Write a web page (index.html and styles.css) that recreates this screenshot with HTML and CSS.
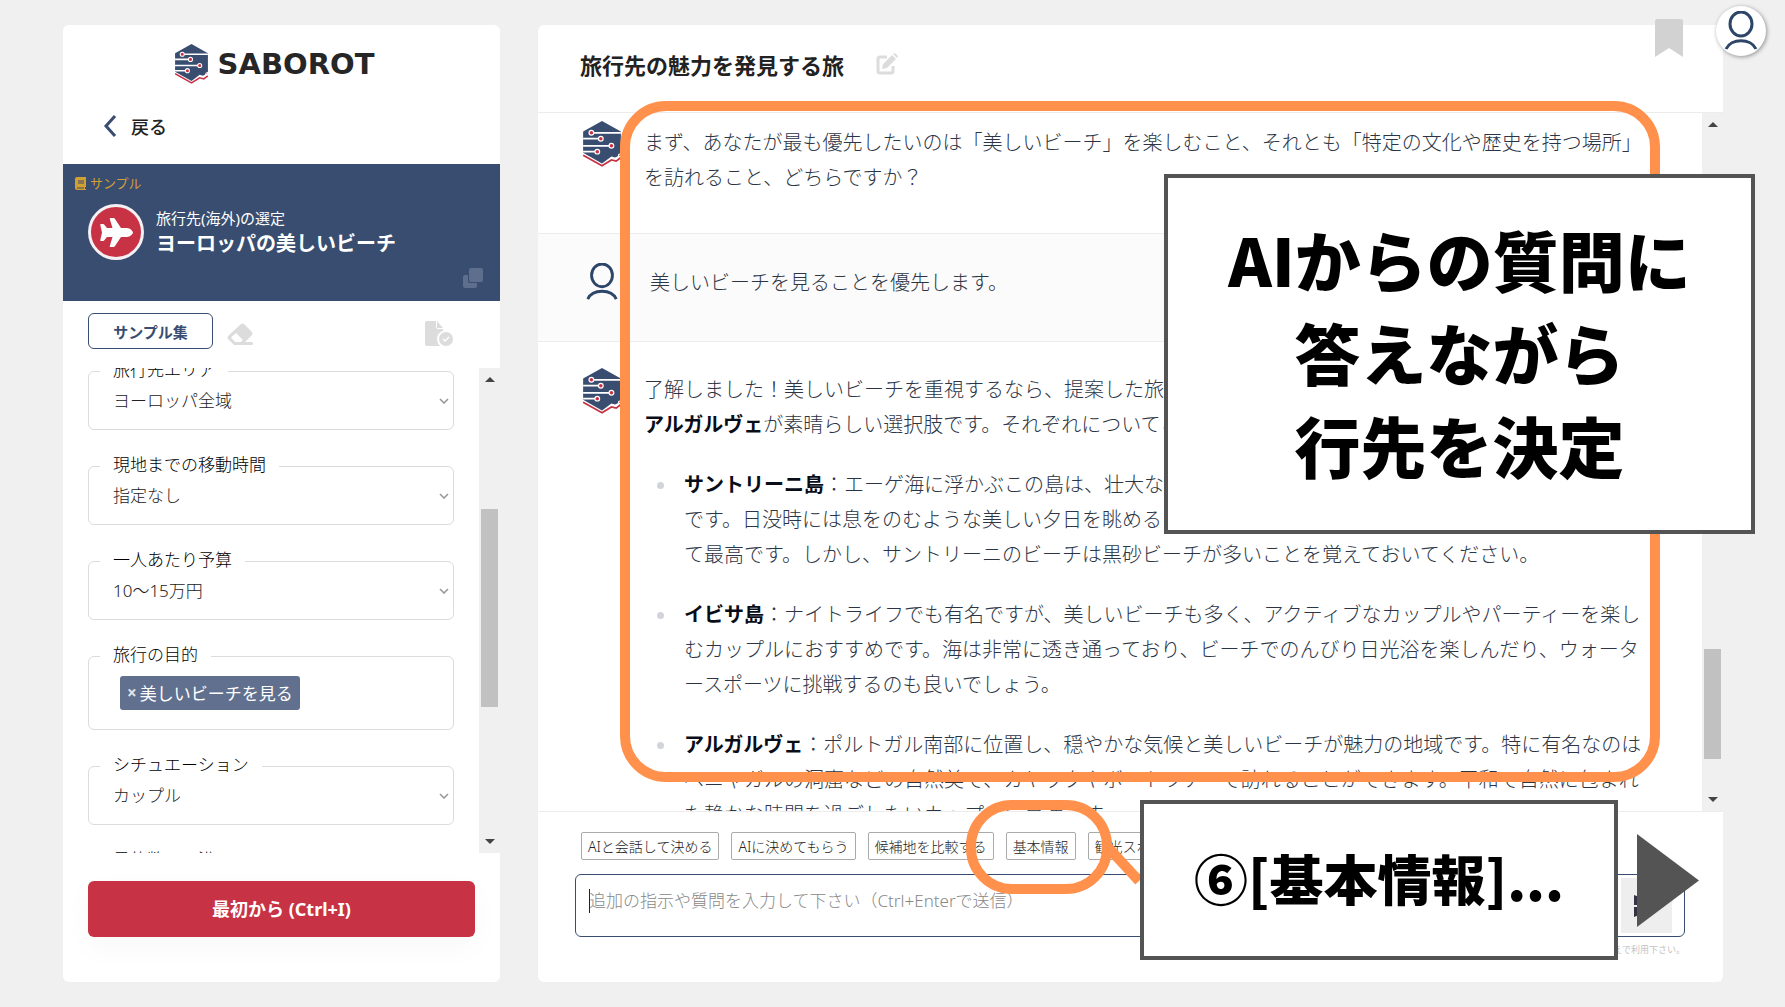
FILE: index.html
```html
<!DOCTYPE html>
<html lang="ja">
<head>
    <meta charset="UTF-8">
    <meta name="viewport" content="width=device-width, initial-scale=1.0">
    <title>SABOROT</title>
    <link rel="stylesheet" href="styles.css">
</head>
<body>
    <!-- shared icons -->
    <svg class="sprite" aria-hidden="true">
        <symbol id="icon-robot" viewBox="0 0 32 39">
            <path d="M0 29 L16 38 L24 33 L28 34 L32 31" fill="none" stroke="#c73345" stroke-width="1.500"></path>
            <path d="M16 0 L32 9 V27 L29 30 L27 31 L24 30 L16 36 L0 27 V9 Z" fill="#384d70"></path>
            <path d="M7 10 H32 M0 15 H15 M0 21 H24 M0 26 H12" stroke="#fff" stroke-width="1.500"></path>
            <g fill="#c73345" stroke="#fff" stroke-width="1">
                <circle cx="7" cy="10" r="2"></circle>
                <circle cx="15" cy="15" r="2"></circle>
                <circle cx="24" cy="21" r="2"></circle>
                <circle cx="12" cy="26" r="2"></circle>
                <circle cx="31" cy="29" r="1"></circle>
            </g>
        </symbol>
        <symbol id="icon-user" viewBox="0 0 36 40">
            <ellipse cx="18" cy="13" rx="11" ry="12" fill="none" stroke="#2c4568" stroke-width="3"></ellipse>
            <path d="M3 38 C8 27 28 27 33 38" fill="none" stroke="#2c4568" stroke-width="3"></path>
        </symbol>
        <symbol id="icon-down" viewBox="0 0 10 6">
            <path d="M1 1 L5 5 L9 1" fill="none" stroke="#999" stroke-width="1.6"></path>
        </symbol>
    </svg>

    <div class="app">
        <aside class="sidebar">
            <div class="logo">
                <svg width="33" height="40"><use href="#icon-robot"></use></svg>
                <span>SABOROT</span>
            </div>

            <a href="#" class="back">
                <svg width="14" height="22" viewBox="0 0 14 22" fill="none" stroke="#384d70" stroke-width="3">
                    <path d="M12 1 L3 11 L12 21"></path>
                </svg>
                戻る
            </a>

            <div class="agent">
                <div class="agent-tag">
                    <svg width="11" height="13" viewBox="0 0 11 13">
                        <path d="M2 0 H11 V10 H10 V12 H11 V13 H2 Q0 13 0 11 V2 Q0 0 2 0 Z" fill="#d2a032"></path>
                        <path d="M3 4 H9 M3 6 H9 M2 11 H9" stroke="#384d70"></path>
                    </svg>
                    サンプル
                </div>
                <div class="agent-info">
                    <div class="agent-icon">
                        <svg width="33" height="29" viewBox="0 0 33 29">
                            <path d="M27 10 C30 10 33 13 33 14.500 C33 16 30 19 27 19 H21 L15 28 Q14.500 29 13.500 29 H10.500 Q9.500 29 9.800 28 L12.500 19 H7 L4.500 22 Q4 23 3 23 H1 Q0 23 .3 22 L2 14.500 L.3 7 Q0 6 1 6 H3 Q4 6 4.500 7 L7 10 H12.500 L9.800 1 Q9.500 0 10.500 0 H13.500 Q14.500 0 15 1 L21 10 Z" fill="#fff"></path>
                        </svg>
                    </div>
                    <div>
                        <p class="agent-type">旅行先(海外)の選定</p>
                        <h2>ヨーロッパの美しいビーチ</h2>
                    </div>
                </div>
                <button type="button" class="icon-button copy" aria-label="コピー">
                    <svg width="20" height="20" viewBox="0 0 20 20" fill="#5d6f8c">
                        <path d="M2 7 H5 V13 Q5 15 7 15 H14 V18 Q14 20 12 20 H2 Q0 20 0 18 V9 Q0 7 2 7 Z"></path>
                        <rect x="6" y="0" width="14" height="14" rx="2"></rect>
                    </svg>
                </button>
            </div>

            <div class="tools">
                <button type="button" class="sample-button">サンプル集</button>
                <button type="button" class="icon-button" aria-label="クリア">
                    <svg width="26" height="22" viewBox="0 0 26 22">
                        <path d="M14 1 Q15.500 0 17 1 L25 9 Q26 10.500 25 12 L18 19 H25 Q26 19 26 20.500 Q26 22 25 22 H7 L1 16 Q0 14.500 1 13 Z M9 10 L4 14.500 L8 19 H14 L16 17 Z" fill="#dcdcdc" fill-rule="evenodd"></path>
                    </svg>
                </button>
                <button type="button" class="icon-button tools-end" aria-label="適用">
                    <svg width="28" height="25" viewBox="0 0 28 25">
                        <path d="M2 0 H11 V6 Q11 8 13 8 H18 V10 Q12 12 12 18 Q12 22 15 25 H2 Q0 25 0 23 V2 Q0 0 2 0 Z M12 0 L18 7 H12 Z" fill="#dcdcdc"></path>
                        <circle cx="21" cy="18" r="7" fill="#dcdcdc"></circle>
                        <path d="M18 18 L20 20 L24 16" fill="none" stroke="#fff" stroke-width="1.500"></path>
                    </svg>
                </button>
            </div>

            <div class="form-scroll">
                <form class="fields">
                    <div class="field">
                        <label for="area">旅行先エリア</label>
                        <select id="area"><option>ヨーロッパ全域</option></select>
                        <svg class="field-arrow"><use href="#icon-down"></use></svg>
                    </div>
                    <div class="field">
                        <label for="time">現地までの移動時間</label>
                        <select id="time"><option>指定なし</option></select>
                        <svg class="field-arrow"><use href="#icon-down"></use></svg>
                    </div>
                    <div class="field">
                        <label for="budget">一人あたり予算</label>
                        <select id="budget"><option>10～15万円</option></select>
                        <svg class="field-arrow"><use href="#icon-down"></use></svg>
                    </div>
                    <div class="field field-tags" role="group" aria-labelledby="purpose">
                        <span class="field-label" id="purpose">旅行の目的</span>
                        <button type="button" class="tag"><b>×</b>美しいビーチを見る</button>
                    </div>
                    <div class="field">
                        <label for="situation">シチュエーション</label>
                        <select id="situation"><option>カップル</option></select>
                        <svg class="field-arrow"><use href="#icon-down"></use></svg>
                    </div>
                    <div class="field">
                        <label for="days">目的数の川沿</label>
                        <select id="days"><option>指定なし</option></select>
                    </div>
                </form>
                <div class="scrollbar">
                    <i class="arrow-up"></i>
                    <i class="thumb form-thumb"></i>
                    <i class="arrow-down"></i>
                </div>
            </div>

            <button type="button" class="restart">最初から (Ctrl+I)</button>
        </aside>

        <main class="chat">
            <header class="chat-header">
                <h1>旅行先の魅力を発見する旅</h1>
                <button type="button" class="icon-button" aria-label="編集">
                    <svg width="22" height="22" viewBox="0 0 22 22">
                        <path d="M11 4 H4 Q2 4 2 6 V18 Q2 20 4 20 H15 Q17 20 17 18 V13" fill="none" stroke="#dcdcdc" stroke-width="3"></path>
                        <path d="M16 2 L20 6 L11 15 L6 16 L7 11 Z M17 1 Q18.500 -.5 20 1 L21 2 Q22.500 3.500 21 5 Z" fill="#dcdcdc"></path>
                    </svg>
                </button>
            </header>

            <div class="chat-scroll">
                <div class="messages">
                    <article class="message message-first">
                        <svg class="avatar"><use href="#icon-robot"></use></svg>
                        <div class="message-text">
                            <p>まず、あなたが最も優先したいのは「美しいビーチ」を楽しむこと、それとも「特定の文化や歴史を持つ場所」を訪れること、どちらですか？</p>
                        </div>
                    </article>
                    <article class="message message-user">
                        <svg class="avatar"><use href="#icon-user"></use></svg>
                        <div class="message-text">
                            <p>美しいビーチを見ることを優先します。</p>
                        </div>
                    </article>
                    <article class="message">
                        <svg class="avatar"><use href="#icon-robot"></use></svg>
                        <div class="message-text">
                            <p>了解しました！美しいビーチを重視するなら、提案した旅行先の中でも、サントリーニ島、イビサ島、そして、<strong>アルガルヴェ</strong>が素晴らしい選択肢です。それぞれについてご紹介します。</p>
                            <ul>
                                <li><strong>サントリーニ島</strong>：エーゲ海に浮かぶこの島は、壮大な景色と白い建物、そして青い屋根で知られる人気の地です。日没時には息をのむような美しい夕日を眺めることができ、ロマンチックなカップルでの旅行先として最高です。しかし、サントリーニのビーチは黒砂ビーチが多いことを覚えておいてください。</li>
                                <li><strong>イビサ島</strong>：ナイトライフでも有名ですが、美しいビーチも多く、アクティブなカップルやパーティーを楽しむカップルにおすすめです。海は非常に透き通っており、ビーチでのんびり日光浴を楽しんだり、ウォータースポーツに挑戦するのも良いでしょう。</li>
                                <li><strong>アルガルヴェ</strong>：ポルトガル南部に位置し、穏やかな気候と美しいビーチが魅力の地域です。特に有名なのはベニャガルの洞窟などの自然美で、カヤックやボートツアーで訪れることができます。平和で自然に包まれた静かな時間を過ごしたいカップルに最適です。</li>
                            </ul>
                        </div>
                    </article>
                </div>
                <div class="scrollbar">
                    <i class="arrow-up"></i>
                    <i class="thumb chat-thumb"></i>
                    <i class="arrow-down"></i>
                </div>
            </div>

            <footer class="composer">
                <div class="chips">
                    <button type="button">AIと会話して決める</button>
                    <button type="button">AIに決めてもらう</button>
                    <button type="button">候補地を比較する</button>
                    <button type="button">基本情報</button>
                    <button type="button">観光スポット</button>
                </div>
                <div class="input-box">
                    <textarea rows="1" aria-label="メッセージ" placeholder="追加の指示や質問を入力して下さい（Ctrl+Enterで送信）"></textarea>
                    <span class="caret"></span>
                    <button type="button" class="send" aria-label="送信">
                        <svg width="26" height="24" viewBox="0 0 26 24" fill="#334">
                            <path d="M0 1 L26 11 H0 Z M0 23 L26 13 H0 Z"></path>
                        </svg>
                    </button>
                </div>
                <p class="notice">回答の正確性は保証されません。ご確認のうえで利用下さい。</p>
            </footer>

            <!-- tutorial overlay -->
            <div class="mark mark-messages"></div>
            <div class="mark mark-chip"></div>
            <svg class="mark-tail" viewBox="0 0 40 44"><path d="M3 3 L36 39" stroke="#ff914d" stroke-width="10"></path></svg>
            <div class="callout callout-main">AIからの質問に<br>答えながら<br>行先を決定</div>
            <div class="callout callout-step">⑥[基本情報]...</div>
            <button type="button" class="next" aria-label="次へ"></button>
            <svg class="bookmark" viewBox="0 0 28 38"><path d="M2 0 H26 Q28 0 28 2 V38 L14 29 L0 38 V2 Q0 0 2 0 Z" fill="#d2d2d2"></path></svg>
            <button type="button" class="account" aria-label="アカウント">
                <svg width="36" height="40"><use href="#icon-user"></use></svg>
            </button>
        </main>
    </div>
</body>
</html>
```

FILE: styles.css
```css
* {
    margin: 0;
    padding: 0;
    box-sizing: border-box;
}

body {
    background-color: #f0f0f0;
    color: #222;
    font-family: "Noto Sans", "Noto Sans CJK JP", sans-serif;
}

button,
select,
textarea {
    font-family: inherit;
    border: none;
    background: none;
}

button {
    cursor: pointer;
}

svg {
    display: block;
    flex-shrink: 0;
}

.sprite {
    position: absolute;
    width: 0;
    height: 0;
}

.app {
    display: flex;
    gap: 38px;
    height: 100vh;
    padding: 25px 62px 25px 63px;
    overflow: hidden;
}

/* sidebar */
.sidebar {
    display: flex;
    flex-direction: column;
    flex: 0 0 437px;
    background-color: #fff;
    border-radius: 6px;
}

.logo {
    display: flex;
    align-items: center;
    justify-content: center;
    gap: 10px;
    height: 78px;
    padding-right: 14px;
    font: bold 29px "DejaVu Sans", sans-serif;
    color: #262626;
}

.back {
    display: flex;
    align-items: center;
    gap: 14px;
    height: 61px;
    padding: 0 40px 16px;
    font-size: 18px;
    font-weight: 500;
    color: #222;
    text-decoration: none;
}

.agent {
    position: relative;
    height: 137px;
    padding: 10px 12px;
    background-color: #384d70;
    color: #fff;
}

.agent-tag {
    display: flex;
    align-items: center;
    gap: 4px;
    font-size: 13px;
    line-height: 18px;
    color: #d2a032;
}

.agent-info {
    display: flex;
    align-items: center;
    gap: 12px;
    padding: 12px 13px;
}

.agent-icon {
    display: flex;
    align-items: center;
    justify-content: center;
    width: 56px;
    height: 56px;
    border: 3px solid #f4f0f4;
    border-radius: 50%;
    background-color: #c73345;
}

.agent-type {
    font-size: 15px;
    line-height: 24px;
}

.agent h2 {
    font-size: 20px;
    line-height: 28px;
}

.copy {
    position: absolute;
    right: 17px;
    bottom: 13px;
}

.tools {
    display: flex;
    align-items: center;
    gap: 14px;
    height: 67px;
    padding: 0 47px 7px 25px;
}

.tools .icon-button {
    padding-top: 5px;
}

.sample-button {
    width: 125px;
    height: 36px;
    border: 1px solid #384d70;
    border-radius: 6px;
    font-size: 15px;
    font-weight: 700;
    color: #384d70;
}

.tools-end {
    margin-left: auto;
}

.form-scroll {
    display: flex;
    flex: 1;
    gap: 25px;
    min-height: 0;
    padding-left: 25px;
    overflow: hidden;
}

.fields {
    display: flex;
    flex-direction: column;
    flex: 1;
    gap: 36px;
    padding-top: 3px;
}

.field {
    position: relative;
    flex: 0 0 59px;
    border: 1px solid #dcdcdc;
    border-radius: 6px;
}

.field label,
.field-label {
    position: absolute;
    top: -15px;
    left: 11px;
    padding: 0 13px;
    background-color: #fff;
    font-size: 17px;
    font-weight: 300;
    line-height: 26px;
    color: #000;
}

.field select {
    width: 100%;
    height: 57px;
    padding-left: 24px;
    appearance: none;
    font-size: 17px;
    font-weight: 300;
    color: #222;
}

.field-arrow {
    position: absolute;
    top: 26px;
    right: 4px;
    width: 10px;
    height: 6px;
}

.field-tags {
    flex-basis: 74px;
    padding: 19px 31px;
}

.tag {
    display: flex;
    align-items: center;
    gap: 3px;
    height: 34px;
    padding: 0 7px 2px;
    border-radius: 3px;
    background-color: #60708e;
    color: #fff;
    font-size: 17px;
    white-space: nowrap;
}

.tag b {
    font-size: 17px;
    color: #e0e4ea;
}

.scrollbar {
    display: flex;
    flex-direction: column;
    align-items: center;
    flex: 0 0 21px;
    padding: 9px 2px;
    background-color: #f0f0f0;
}

.arrow-up,
.arrow-down {
    border: 5px solid transparent;
}

.arrow-up {
    border-top: none;
    border-bottom-color: #444;
}

.arrow-down {
    margin-top: auto;
    border-bottom: none;
    border-top-color: #444;
}

.thumb {
    width: 17px;
    background-color: #c1c1c1;
}

.form-thumb {
    height: 198px;
    margin-top: 127px;
}

.chat-thumb {
    height: 110px;
    margin-top: 522px;
}

.restart {
    height: 56px;
    margin: 28px 25px 45px;
    padding-bottom: 2px;
    border-radius: 6px;
    background-color: #c73345;
    box-shadow: 0 10px 30px rgba(0, 0, 0, 0.03);
    color: #fff;
    font-size: 18px;
    font-weight: 700;
}

/* chat */
.chat {
    position: relative;
    display: flex;
    flex-direction: column;
    flex: 1;
    min-width: 0;
    background-color: #fff;
    border-radius: 6px;
}

.chat-header {
    display: flex;
    align-items: center;
    gap: 32px;
    height: 88px;
    padding: 0 42px 10px;
    border-bottom: 1px solid #ececec;
}

.chat-header h1 {
    font-size: 22px;
    font-weight: 700;
}

.chat-scroll {
    display: flex;
    flex: 1;
    min-height: 0;
    overflow: hidden;
}

.messages {
    flex: 1;
    min-width: 0;
}

.message {
    display: flex;
    gap: 20px;
    padding: 30px 54px 41px 42px;
    border-bottom: 1px solid #ececec;
}

.message-first {
    padding-top: 12px;
    padding-bottom: 38px;
}

.message-user {
    gap: 26px;
    padding-top: 31px;
    padding-bottom: 40px;
    background-color: #fbfbfb;
}

.avatar {
    width: 44px;
    height: 46px;
    margin-top: -4px;
}

.message-user .avatar {
    height: 38px;
    margin-top: -2px;
}

.message-text {
    flex: 1;
    font-size: 20px;
    font-weight: 300;
    line-height: 35px;
    color: #2c3545;
}

.message-text strong {
    font-weight: 700;
    color: #080d18;
}

.message-text ul {
    margin-top: 25px;
    padding-left: 40px;
    list-style: none;
}

.message-text li {
    position: relative;
    margin-bottom: 25px;
}

.message-text li::before {
    content: "";
    position: absolute;
    top: 15px;
    left: -27px;
    width: 7px;
    height: 7px;
    border-radius: 50%;
    background-color: #d1d5db;
}

.composer {
    height: 171px;
    padding: 20px 38px 0 37px;
    border-top: 1px solid #ececec;
}

.chips {
    display: flex;
    gap: 12px;
    padding: 0 6px 14px;
}

.chips button {
    height: 28px;
    padding: 0 6px 1px;
    border: 1px solid #aaa;
    border-radius: 2px;
    font-size: 14px;
    font-weight: 300;
    color: #222;
    white-space: nowrap;
}

.input-box {
    position: relative;
    display: flex;
    height: 63px;
    padding: 3px 12px 3px 13px;
    border: 1px solid #384d70;
    border-radius: 6px;
}

.input-box textarea {
    flex: 1;
    padding-top: 10px;
    outline: none;
    resize: none;
    font-size: 17px;
    font-weight: 300;
    line-height: 26px;
}

.input-box textarea::placeholder {
    color: #888;
}

.caret {
    position: absolute;
    top: 14px;
    left: 13px;
    width: 1px;
    height: 24px;
    background-color: #222;
}

.send {
    display: flex;
    align-items: center;
    justify-content: center;
    width: 51px;
    background-color: #eee;
}

.notice {
    padding-top: 5px;
    font-size: 9px;
    line-height: 16px;
    text-align: right;
    color: #c4c4c4;
}

/* tutorial overlay */
.mark {
    position: absolute;
    border: 10px solid #ff914d;
    border-radius: 46px;
}

.mark-messages {
    top: 76px;
    right: 63px;
    bottom: 200px;
    left: 82px;
}

.mark-chip {
    bottom: 88px;
    left: 428px;
    width: 146px;
    height: 94px;
}

.mark-tail {
    position: absolute;
    bottom: 96px;
    left: 565px;
    width: 40px;
    height: 44px;
}

.callout {
    position: absolute;
    display: flex;
    align-items: center;
    justify-content: center;
    padding-bottom: 6px;
    border: 4px solid #545454;
    background-color: #fff;
    color: #000;
    font-family: "Noto Sans CJK JP", sans-serif;
    font-weight: 900;
    text-align: center;
    white-space: nowrap;
}

.callout-main {
    top: 149px;
    right: -32px;
    width: 591px;
    height: 360px;
    font-size: 66px;
    line-height: 93px;
}

.callout-step {
    right: 105px;
    bottom: 22px;
    width: 478px;
    height: 160px;
    font-size: 54px;
}

.next {
    position: absolute;
    right: 24px;
    bottom: 55px;
    width: 62px;
    height: 93px;
    background-color: #545454;
    clip-path: polygon(0 0, 100% 50%, 0 100%);
}

.bookmark {
    position: absolute;
    top: -6px;
    right: 40px;
    width: 28px;
    height: 38px;
}

.account {
    position: absolute;
    top: -19px;
    right: -43px;
    display: flex;
    align-items: center;
    justify-content: center;
    width: 50px;
    height: 50px;
    border-radius: 50%;
    background-color: #fff;
    box-shadow: 1px 1px 4px rgba(0, 0, 0, 0.4);
}
```
